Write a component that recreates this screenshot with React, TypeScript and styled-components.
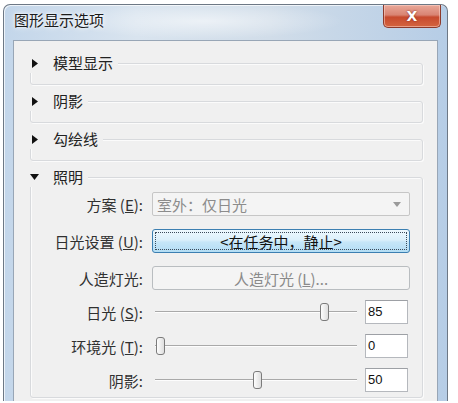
import React from "react";
import styled, { createGlobalStyle } from "styled-components";

const GlobalStyle = createGlobalStyle`
  html, body {
    margin: 0;
    padding: 0;
    background: #fff;
  }
  body {
    font-family: "Noto Sans CJK SC", "Noto Sans", sans-serif;
    color: #1e1e1e;
  }
`;

const Window = styled.div`
  margin: 4px 0 0 3px;
  width: 445px;
  height: 397px;
  box-sizing: border-box;
  border: 1px solid #6d7885;
  border-bottom: none;
  border-radius: 7px 7px 0 0;
  padding: 0 9px;
  display: flex;
  flex-direction: column;
  background:
    radial-gradient(ellipse 140px 18px at 200px 16px, rgba(255, 255, 255, 0.55), rgba(255, 255, 255, 0)),
    linear-gradient(to right, #c3d6ea 0%, #d9e4ef 30%, #d1dde9 60%, #b6cde6 100%);
  box-shadow: inset 1px 1px 0 rgba(255, 255, 255, 0.7);
`;

const TitleBar = styled.div`
  height: 35px;
  display: flex;
  align-items: flex-start;
  justify-content: space-between;
  flex-shrink: 0;
`;

const Title = styled.div`
  margin: 5px 0 0 1px;
  font-size: 15px;
  line-height: 20px;
  color: #1b1b1b;
  text-shadow: 0 0 6px #fff, 0 0 3px #fff;
`;

const CloseButton = styled.div`
  width: 58px;
  height: 23px;
  margin-right: -3px;
  box-sizing: border-box;
  border: 1px solid #8c3a2c;
  border-top: none;
  border-radius: 0 0 5px 5px;
  background: linear-gradient(to bottom, #e9a899 0%, #d98473 45%, #c74a2e 55%, #d4643f 100%);
  box-shadow: inset 0 0 0 1px rgba(255, 220, 210, 0.5);
  display: flex;
  align-items: center;
  justify-content: center;
  color: #fff;
  font-family: "DejaVu Sans", sans-serif;
  font-weight: bold;
  font-size: 14px;
  text-shadow: 0 0 2px #7a2010;
`;

const Client = styled.div`
  flex: 1;
  box-sizing: border-box;
  background: #f0f0f0;
  border: 1px solid #98a6b6;
  border-bottom: none;
  padding: 22px 14px 0 16px;
  display: flex;
  flex-direction: column;
  gap: 16px;
`;

const Group = styled.div<{ $open?: boolean }>`
  position: relative;
  box-sizing: border-box;
  height: ${(p) => (p.$open ? "221px" : "20px")};
  border: 1px solid #d8dadd;
  border-radius: 3px;
  box-shadow: inset 1px 1px 0 #fbfbfb, 1px 1px 0 #fbfbfb;
  padding: 14px 13px 6px 0;
`;

const GroupHeader = styled.div`
  position: absolute;
  top: -11px;
  left: -5px;
  height: 20px;
  display: flex;
  align-items: center;
  background: #f0f0f0;
  padding-right: 5px;
`;

const Toggle = styled.span`
  width: 17px;
  height: 17px;
  display: flex;
  align-items: center;
  justify-content: center;
  margin-right: 10px;
`;

const GroupTitle = styled.span`
  font-size: 15px;
  line-height: 20px;
  color: #222;
`;

const Form = styled.div`
  display: grid;
  grid-template-columns: 112px 258px;
  grid-template-rows: 27px 27px 24px 24px 24px 24px;
  column-gap: 9px;
  row-gap: 10px;
`;

const Label = styled.div`
  height: 24px;
  display: flex;
  align-items: center;
  justify-content: flex-end;
  font-size: 15px;
  color: #303030;
  white-space: nowrap;

  u {
    text-decoration: underline;
  }
`;

const Combo = styled.div`
  height: 24px;
  box-sizing: border-box;
  border: 1px solid #c6c6c6;
  border-radius: 2px;
  background: #f4f4f4;
  display: flex;
  align-items: center;
  justify-content: space-between;
  padding: 0 8px 0 4px;
  font-size: 15px;
  color: #8c8c8c;
`;

const Button = styled.div<{ $focused?: boolean }>`
  position: relative;
  height: 24px;
  box-sizing: border-box;
  border-radius: 3px;
  display: flex;
  align-items: center;
  justify-content: center;
  font-size: 15px;
  color: ${(p) => (p.$focused ? "#111" : "#8a8a8a")};
  border: 1px solid ${(p) => (p.$focused ? "#3c7fb1" : "#b9bdc0")};
  background: ${(p) =>
    p.$focused
      ? "linear-gradient(to bottom, #eef8fe 0%, #dcf0fb 45%, #c6e6f8 55%, #b3ddf4 100%)"
      : "#f4f4f4"};

  &::after {
    content: "";
    display: ${(p) => (p.$focused ? "block" : "none")};
    position: absolute;
    inset: 2px;
    border: 1px dotted #3a4a5a;
  }
`;

const SliderRow = styled.div`
  height: 24px;
  display: flex;
  align-items: center;
  gap: 6px;
`;

const Slider = styled.div`
  position: relative;
  width: 207px;
  height: 24px;
`;

const Track = styled.div`
  position: absolute;
  left: 3px;
  right: 2px;
  top: 11px;
  height: 0;
  border-top: 1px solid #a9a9a9;
  border-bottom: 1px solid #fdfdfd;
`;

const Thumb = styled.div`
  position: absolute;
  top: 3px;
  width: 9px;
  height: 18px;
  box-sizing: border-box;
  border: 1px solid #7b7b7b;
  border-radius: 3px;
  background: linear-gradient(to right, #fdfdfd, #dedede);
`;

const NumberBox = styled.div`
  width: 43px;
  height: 24px;
  box-sizing: border-box;
  border: 1px solid #b5b8bd;
  border-top-color: #9da0a5;
  background: #fff;
  padding: 3px 2px;
  font-family: "Liberation Sans", Arial, sans-serif;
  font-size: 13px;
  line-height: 15px;
  color: #111;
`;

const RightTri = () => (
  <svg width="6" height="9" viewBox="0 0 6 9">
    <path d="M0 0 L6 4.5 L0 9 Z" fill="#111" />
  </svg>
);

const DownTri = () => (
  <svg width="9" height="6" viewBox="0 0 9 6">
    <path d="M0 0 L9 0 L4.5 6 Z" fill="#111" />
  </svg>
);

const ComboArrow = () => (
  <svg width="8" height="5" viewBox="0 0 8 5">
    <path d="M0 0 L8 0 L4 5 Z" fill="#9a9a9a" />
  </svg>
);

const SliderField = ({ value }: { value: number }) => (
  <SliderRow>
    <Slider>
      <Track />
      <Thumb style={{ left: `${3.5 + value * 1.94}px` }} />
    </Slider>
    <NumberBox>{value}</NumberBox>
  </SliderRow>
);

const collapsed = ["模型显示", "阴影", "勾绘线"];

const App = () => (
  <>
    <GlobalStyle />
    <Window>
      <TitleBar>
        <Title>图形显示选项</Title>
        <CloseButton>X</CloseButton>
      </TitleBar>
      <Client>
        {collapsed.map((name) => (
          <Group key={name}>
            <GroupHeader>
              <Toggle>
                <RightTri />
              </Toggle>
              <GroupTitle>{name}</GroupTitle>
            </GroupHeader>
          </Group>
        ))}
        <Group $open>
          <GroupHeader>
            <Toggle>
              <DownTri />
            </Toggle>
            <GroupTitle>照明</GroupTitle>
          </GroupHeader>
          <Form>
            <Label>
              方案 (<u>E</u>):
            </Label>
            <Combo>
              <span>室外：仅日光</span>
              <ComboArrow />
            </Combo>
            <Label>
              日光设置 (<u>U</u>):
            </Label>
            <Button $focused>&lt;在任务中，静止&gt;</Button>
            <Label>人造灯光:</Label>
            <Button>
              人造灯光 (<u>L</u>)...
            </Button>
            <Label>
              日光 (<u>S</u>):
            </Label>
            <SliderField value={85} />
            <Label>
              环境光 (<u>T</u>):
            </Label>
            <SliderField value={0} />
            <Label>阴影:</Label>
            <SliderField value={50} />
          </Form>
        </Group>
      </Client>
    </Window>
  </>
);

export default App;
